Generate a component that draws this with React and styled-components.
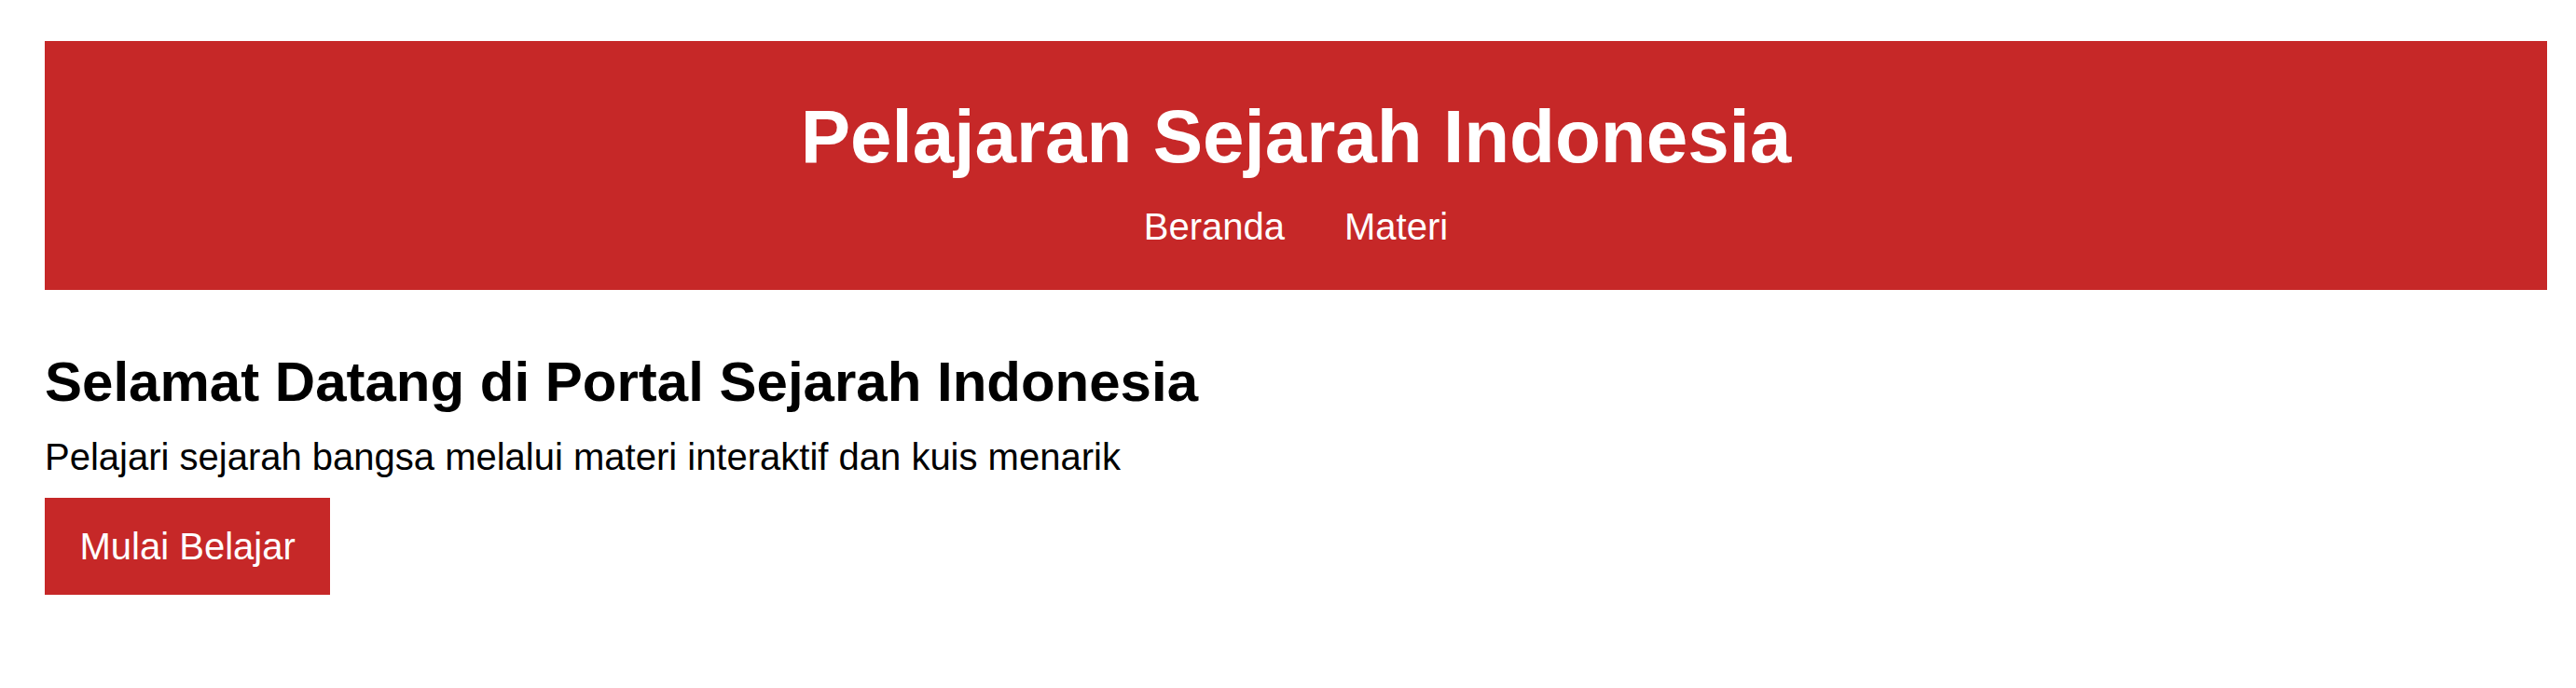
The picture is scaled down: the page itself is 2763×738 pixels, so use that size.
import React from "react";
import styled, { createGlobalStyle } from "styled-components";

const GlobalStyle = createGlobalStyle`
  body {
    margin: 0;
    background: #fff;
    font-family: "Liberation Sans", Arial, sans-serif;
    color: #000;
  }
`;

const Page = styled.div`
  padding: 44px 31px 40px 48px;
`;

const Header = styled.header`
  background: #c62828;
  color: #fff;
  text-align: center;
  padding: 57px 0 45px;
`;

const Title = styled.h1`
  margin: 0;
  font-size: 80px;
  font-weight: bold;
  line-height: 92px;
`;

const Nav = styled.nav`
  display: flex;
  justify-content: center;
  gap: 64px;
  margin-top: 27px;
`;

const NavLink = styled.a`
  color: #fff;
  text-decoration: none;
  font-size: 40px;
  line-height: 46px;
`;

const Hero = styled.section`
  margin-top: 64px;
`;

const Heading = styled.h2`
  margin: 0;
  font-size: 60px;
  font-weight: bold;
  line-height: 69px;
`;

const Lead = styled.p`
  margin: 23px 0 21px;
  font-size: 40px;
  line-height: 46px;
`;

const Button = styled.button`
  background: #c62828;
  color: #fff;
  border: none;
  padding: 29px 37.5px;
  font-family: "Liberation Sans", Arial, sans-serif;
  font-size: 40px;
  line-height: 46px;
  cursor: pointer;
`;

function App() {
  return (
    <Page>
      <GlobalStyle />
      <Header>
        <Title>Pelajaran Sejarah Indonesia</Title>
        <Nav>
          <NavLink href="#beranda">Beranda</NavLink>
          <NavLink href="#materi">Materi</NavLink>
        </Nav>
      </Header>
      <Hero>
        <Heading>Selamat Datang di Portal Sejarah Indonesia</Heading>
        <Lead>Pelajari sejarah bangsa melalui materi interaktif dan kuis menarik</Lead>
        <Button>Mulai Belajar</Button>
      </Hero>
    </Page>
  );
}

export default App;
